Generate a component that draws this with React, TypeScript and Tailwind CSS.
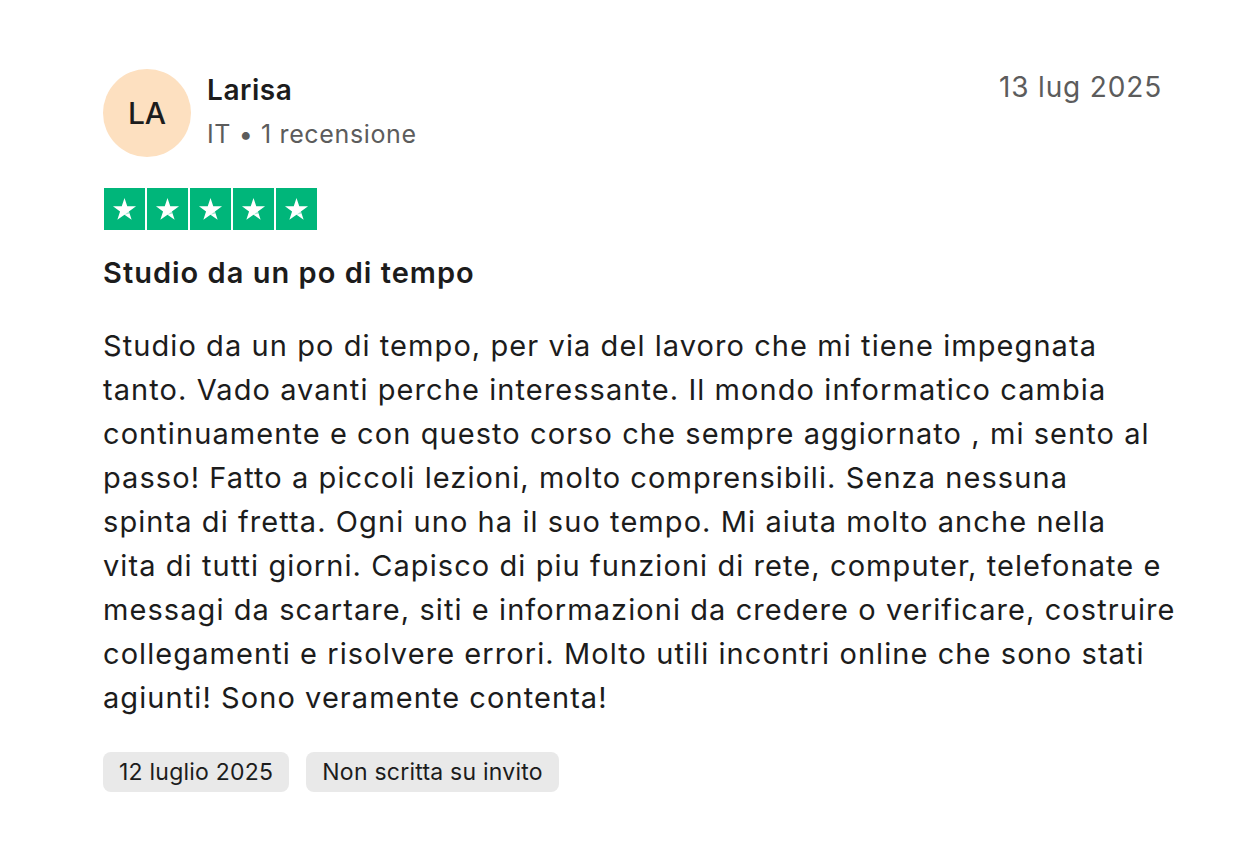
import React from 'react';

const LINES = [
  'Studio da un po di tempo, per via del lavoro che mi tiene impegnata',
  'tanto. Vado avanti perche interessante. Il mondo informatico cambia',
  'continuamente e con questo corso che sempre aggiornato , mi sento al',
  'passo! Fatto a piccoli lezioni, molto comprensibili. Senza nessuna',
  'spinta di fretta. Ogni uno ha il suo tempo. Mi aiuta molto anche nella',
  'vita di tutti giorni. Capisco di piu funzioni di rete, computer, telefonate e',
  'messagi da scartare, siti e informazioni da credere o verificare, costruire',
  'collegamenti e risolvere errori. Molto utili incontri online che sono stati',
  'agiunti! Sono veramente contenta!',
];

const Star = () => (
  <svg viewBox="0 0 24 24" className="w-[27px] h-[27px]">
    <path fill="#ffffff" d="M12 1.8l2.45 7.4h7.8l-6.3 4.6 2.4 7.4L12 16.6l-6.35 4.6 2.4-7.4-6.3-4.6h7.8z" />
    <path fill="#00b67a" fillOpacity="0.35" d="M15.95 13.8l0.55 1.75L12 16.6z" />
  </svg>
);

const App: React.FC = () => {
  return (
    <div className="min-h-screen bg-white font-['Inter',sans-serif] text-[#1c1c1c]">
      <div className="pl-[103px] pr-[98px] pt-[69px]">
        {/* Header */}
        <div className="flex items-start justify-between">
          <div className="flex items-start gap-4">
            <div className="w-[88px] h-[88px] rounded-full bg-[#fde0c0] flex items-center justify-center text-[30px] font-medium">
              LA
            </div>
            <div className="pt-[3px]">
              <div className="text-[28px] font-semibold leading-[36px] tracking-[0.02em]">Larisa</div>
              <div className="text-[25px] leading-[34px] text-[#5c5c5c] tracking-[0.025em] mt-[9px]">
                IT • 1 recensione
              </div>
            </div>
          </div>
          <div className="text-[28px] leading-[36px] text-[#5c5c5c] tracking-[0.03em]">13 lug 2025</div>
        </div>

        {/* Stars */}
        <div className="flex gap-[2px] mt-[31px] ml-[1px]">
          {[0, 1, 2, 3, 4].map(i => (
            <div key={i} className="w-[41px] h-[42px] bg-[#00b67a] flex items-center justify-center">
              <Star />
            </div>
          ))}
        </div>

        {/* Title */}
        <h2 className="mt-[24px] text-[29px] font-semibold leading-[38px] tracking-[0.035em]">
          Studio da un po di tempo
        </h2>

        {/* Body */}
        <p className="mt-[32px] text-[29px] leading-[44px] tracking-[0.037em]">
          {LINES.map((l, i) => (
            <span key={i} className="block whitespace-nowrap">{l}</span>
          ))}
        </p>

        {/* Tags */}
        <div className="flex gap-[17px] mt-[32px]">
          <span className="inline-flex items-center h-[40px] px-4 rounded-lg bg-[#e9e9e9] text-[23px] tracking-[0.01em]">
            12 luglio 2025
          </span>
          <span className="inline-flex items-center h-[40px] px-4 rounded-lg bg-[#e9e9e9] text-[23px] tracking-[0.01em]">
            Non scritta su invito
          </span>
        </div>
      </div>
    </div>
  );
};

export default App;
